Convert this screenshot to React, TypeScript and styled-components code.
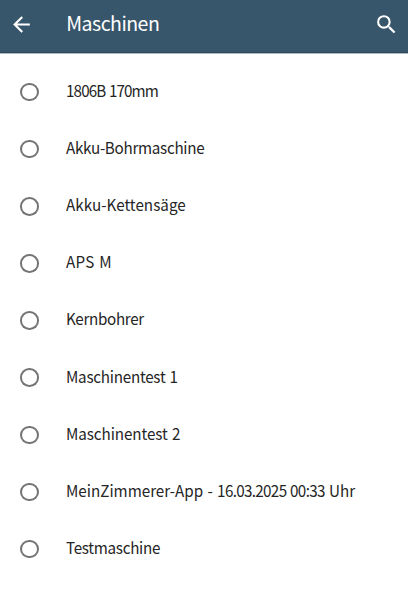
import React from "react";
import styled, { createGlobalStyle } from "styled-components";

const GlobalStyle = createGlobalStyle`
  body { margin: 0; background: #fff; overflow: hidden; }
  * { box-sizing: border-box; }
`;

const Screen = styled.main`
  width: 100%;
  height: 595px;
  background: #fff;
  font-family: "Noto Sans CJK JP", "Open Sans", sans-serif;
`;

const AppBar = styled.header`
  display: flex;
  align-items: center;
  height: 53.4px;
  padding: 0 8.9px 3.6px 9.1px;
  background: #38566b;
  border-bottom: 1px solid #2e4a60;
  box-shadow: 0 1px 0 rgba(56, 86, 107, 0.4);
  color: #fff;
`;

const IconButton = styled.button`
  display: flex;
  flex: none;
  padding: 0;
  border: 0;
  background: none;
  color: inherit;
`;

const Title = styled.h1`
  flex: 1;
  margin: -3.4px 0 0 32.2px;
  font-size: 19.5px;
  font-weight: 400;
  line-height: 28px;
  letter-spacing: -0.52px;
`;

const List = styled.ul`
  margin: 0;
  padding: 10px 0 0;
  list-style: none;
`;

const Row = styled.li`
  display: flex;
  align-items: center;
  height: 57.15px;
  padding-left: 20.4px;
`;

const Radio = styled.span`
  flex: none;
  width: 18.6px;
  height: 18.6px;
  border-radius: 50%;
  box-shadow: inset 0 0 0 2px #747474;
`;

const Label = styled.span<{ $spacing: number }>`
  margin: -4.3px 0 0 27px;
  font-size: 16px;
  line-height: 24px;
  color: #252525;
  white-space: nowrap;
  letter-spacing: ${(p) => p.$spacing}px;
  word-spacing: 1px;
  transform: scaleX(0.95);
  transform-origin: left center;
`;

const Time = styled.span`
  letter-spacing: -0.7px;
`;

const machines: { name: string; time?: string; suffix?: string; spacing: number }[] = [
  { name: "1806B 170mm", spacing: -0.91 },
  { name: "Akku-Bohrmaschine", spacing: -0.3 },
  { name: "Akku-Kettensäge", spacing: 0.03 },
  { name: "APS M", spacing: 0.3 },
  { name: "Kernbohrer", spacing: -0.35 },
  { name: "Maschinentest 1", spacing: -0.26 },
  { name: "Maschinentest 2", spacing: -0.07 },
  { name: "MeinZimmerer-App - ", time: "16.03.2025 00:33", suffix: " Uhr", spacing: 0 },
  { name: "Testmaschine", spacing: -0.3 },
];

export default function App() {
  return (
    <Screen>
      <GlobalStyle />
      <AppBar>
        <IconButton aria-label="Zurück">
          <svg width="25" height="25" viewBox="0 0 24 24" fill="currentColor">
            <path d="M20 11H7.83l5.59-5.59L12 4l-8 8 8 8 1.41-1.41L7.83 13H20v-2z" />
          </svg>
        </IconButton>
        <Title>Maschinen</Title>
        <IconButton aria-label="Suchen">
          <svg width="25" height="25" viewBox="0 0 24 24" fill="currentColor">
            <path d="M15.5 14h-.79l-.28-.27A6.471 6.471 0 0 0 16 9.5 6.5 6.5 0 1 0 9.5 16c1.61 0 3.09-.59 4.23-1.57l.27.28v.79l5 4.99L20.49 19l-4.99-5zm-6 0C7.01 14 5 11.99 5 9.5S7.01 5 9.5 5 14 7.01 14 9.5 11.99 14 9.5 14z" />
          </svg>
        </IconButton>
      </AppBar>
      <List>
        {machines.map((m) => (
          <Row key={m.name}>
            <Radio />
            <Label $spacing={m.spacing}>
              {m.name}
              {m.time && <Time>{m.time}</Time>}
              {m.suffix}
            </Label>
          </Row>
        ))}
      </List>
    </Screen>
  );
}
